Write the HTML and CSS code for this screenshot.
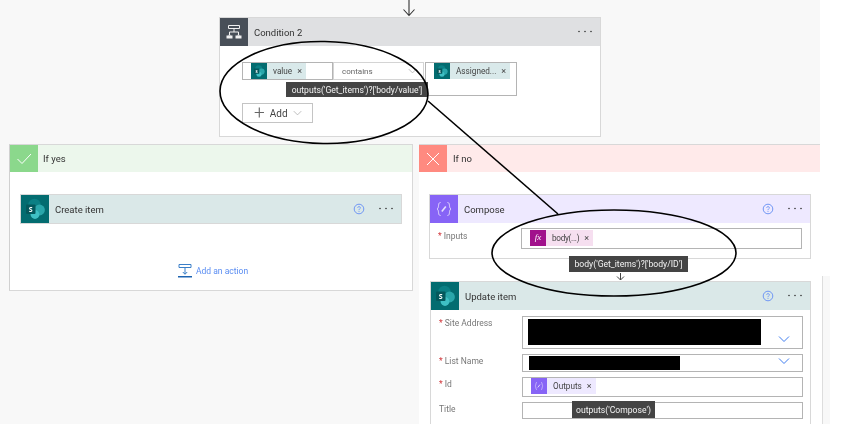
FILE: index.html
```html
<!DOCTYPE html>
<html lang="en">
<head>
<meta charset="utf-8">
<title>Flow designer</title>
<link rel="stylesheet" href="styles.css">
</head>
<body>
<svg width="0" height="0" class="defs">
  <defs>
    <symbol id="sp" viewBox="0 0 28 28">
      <circle cx="13.5" cy="10" r="6.2" fill="#0b7f84"/>
      <circle cx="18.5" cy="15" r="5.4" fill="#2aa6aa"/>
      <circle cx="14" cy="19.5" r="4.4" fill="#3fc0c4"/>
      <rect x="5" y="9.5" width="9.5" height="9.5" rx="1" fill="#04585c"/>
      <text x="9.7" y="17" class="sp-s">S</text>
    </symbol>
    <symbol id="chev" viewBox="0 0 12 8">
      <path d="M1 1.5 6 6.5 11 1.5" fill="none" stroke="currentColor" stroke-width="1"/>
    </symbol>
    <symbol id="help" viewBox="0 0 12 12">
      <circle cx="6" cy="6" r="4.8" fill="none" stroke="#6f96f5" stroke-width="1"/>
      <path d="M4.6 4.8C4.7 3.2 7.4 3.2 7.4 4.8 7.4 5.9 6 5.8 6 7.2M6 8.1V9" fill="none" stroke="#6f96f5" stroke-width=".9"/>
    </symbol>
    <symbol id="dots" viewBox="0 0 16 3">
      <circle cx="2" cy="1.5" r=".8" fill="#333"/>
      <circle cx="8" cy="1.5" r=".8" fill="#333"/>
      <circle cx="14" cy="1.5" r=".8" fill="#333"/>
    </symbol>
    <symbol id="compose" viewBox="0 0 28 28">
      <path d="M10.5 7.5C7.5 7.5 9.5 13 7 14 9.5 15 7.5 20.5 10.5 20.5M17.5 7.5C20.500 7.5 18.500 13 21 14 18.500 15 20.500 20.500 17.500 20.500" fill="none" stroke="#e6defc" stroke-width="1"/>
      <path d="M11.800 16.500 15.800 11.500" stroke="#e6defc" stroke-width="1.600"/>
    </symbol>
  </defs>
</svg>
<div class="page">
  <main class="canvas">
    <svg class="top-arrow" width="14" height="17" viewBox="0 0 14 17"><path d="M7 0V15M1.500 9.500 7 15.500 12.500 9.500" fill="none" stroke="#333" stroke-width="1.100"/></svg>

    <section class="card condition">
      <header class="card-head head-grey">
        <span class="icon icon-grey">
          <svg width="28" height="28" viewBox="0 0 28 28"><path d="M8.500 7.500H19.500V10.500H8.500ZM14 10.500V14M9.500 14H18.500M9.500 14V17M18.500 14V17" fill="none" stroke="#f0f0f0" stroke-width="1"/><path d="M6.500 17.500H12.500V20.500H6.500ZM15.500 17.500H21.500V20.500H15.500Z" fill="#f0f0f0"/><path d="M9.500 16 8 17.500H11ZM18.500 16 17 17.500H20Z" fill="#f0f0f0"/></svg>
        </span>
        <span class="title">Condition 2</span>
        <svg class="more" width="16" height="3"><use href="#dots"/></svg>
      </header>
      <div class="condition-body">
        <div class="cond-row">
          <div class="box cond-box">
            <span class="token token-sp"><svg class="token-icon" viewBox="0 0 28 28"><use href="#sp"/></svg><span class="token-text">value</span><span class="x">×</span></span>
          </div>
          <div class="box cond-box cond-select">
            <span class="select-text">contains</span>
            <svg class="chev chev-grey" width="9" height="6"><use href="#chev"/></svg>
          </div>
          <div class="box cond-box cond-tall">
            <span class="token token-sp"><svg class="token-icon" viewBox="0 0 28 28"><use href="#sp"/></svg><span class="token-text">Assigned...</span><span class="x">×</span></span>
          </div>
        </div>
        <button class="add-btn"><span class="plus">+</span>Add<svg class="chev chev-grey" width="9" height="6"><use href="#chev"/></svg></button>
        <div class="tip tip-cond">outputs('Get_items')?['body/value']</div>
      </div>
    </section>

    <div class="branches">
      <section class="branch branch-yes">
        <header class="branch-head head-yes">
          <span class="branch-icon icon-yes"><svg width="28" height="27" viewBox="0 0 28 27"><path d="M7.500 14 12 18.500 21 9" fill="none" stroke="#fff" stroke-width="1"/></svg></span>
          <span class="title">If yes</span>
        </header>
        <div class="branch-body">
          <article class="card action">
            <header class="card-head head-sp">
              <span class="icon icon-sp"><svg width="28" height="28"><use href="#sp"/></svg></span>
              <span class="title">Create item</span>
              <svg class="help" width="12" height="12"><use href="#help"/></svg>
              <svg class="more" width="16" height="3"><use href="#dots"/></svg>
            </header>
          </article>
          <a class="add-action">
            <svg width="14" height="14" viewBox="0 0 14 14"><path d="M1 .5H13V3.500H1ZM7 3.500V10M4.800 8 7 10.300 9.200 8" fill="none" stroke="#3a7fc8" stroke-width="1"/><path d="M0 12H14V13.500H0Z" fill="#1d63b0"/></svg>
            <span>Add an action</span>
          </a>
        </div>
      </section>

      <section class="branch branch-no">
        <header class="branch-head head-no">
          <span class="branch-icon icon-no"><svg width="28" height="27" viewBox="0 0 28 27"><path d="M8 8 20 20M20 8 8 20" fill="none" stroke="#fff" stroke-width="1"/></svg></span>
          <span class="title">If no</span>
        </header>
        <div class="branch-body branch-body-no">
          <article class="card action">
            <header class="card-head head-compose">
              <span class="icon icon-compose"><svg width="28" height="28"><use href="#compose"/></svg></span>
              <span class="title">Compose</span>
              <svg class="help" width="12" height="12"><use href="#help"/></svg>
              <svg class="more" width="16" height="3"><use href="#dots"/></svg>
            </header>
            <div class="fields">
              <div class="field">
                <label class="label label-first"><i>*</i> Inputs</label>
                <div class="box h-21">
                  <span class="token token-fx"><span class="token-icon fx"><em>fx</em></span><span class="token-text tight">body(...)</span><span class="x">×</span></span>
                </div>
              </div>
            </div>
          </article>
          <div class="connector">
            <svg width="9" height="8" viewBox="0 0 9 8"><path d="M4.500 0V7M1 3.500 4.500 7 8 3.500" fill="none" stroke="#444" stroke-width="1"/></svg>
          </div>
          <article class="card action update">
            <header class="card-head head-sp">
              <span class="icon icon-sp"><svg width="28" height="28"><use href="#sp"/></svg></span>
              <span class="title">Update item</span>
              <svg class="help" width="12" height="12"><use href="#help"/></svg>
              <svg class="more" width="16" height="3"><use href="#dots"/></svg>
            </header>
            <div class="fields fields-update">
              <div class="field">
                <label class="label"><i>*</i> Site Address</label>
                <div class="box h-33 box-dd">
                  <span class="redact redact-site"></span>
                  <svg class="chev chev-blue chev-low" width="12" height="8"><use href="#chev"/></svg>
                </div>
              </div>
              <div class="field">
                <label class="label"><i>*</i> List Name</label>
                <div class="box h-18 box-dd">
                  <span class="redact redact-list"></span>
                  <svg class="chev chev-blue" width="12" height="8"><use href="#chev"/></svg>
                </div>
              </div>
              <div class="field">
                <label class="label"><i>*</i> Id</label>
                <div class="box h-20">
                  <span class="token token-out"><span class="token-icon out"><svg width="16" height="16" viewBox="0 0 28 28"><use href="#compose"/></svg></span><span class="token-text">Outputs</span><span class="x">×</span></span>
                </div>
              </div>
              <div class="field">
                <label class="label">Title</label>
                <div class="box h-17"></div>
              </div>
              <div class="field">
                <span></span>
                <div class="box h-18"></div>
              </div>
              <div class="tip tip-title">outputs('Compose')</div>
            </div>
          </article>
          <div class="tip tip-body">body('Get_items')?['body/ID']</div>
        </div>
      </section>
    </div>

    <svg class="annotations" width="862" height="439" viewBox="0 0 862 439" aria-hidden="true">
      <ellipse cx="324" cy="92.500" rx="104" ry="51" transform="rotate(1 324 92.500)"/>
      <ellipse cx="614" cy="253" rx="122" ry="43"/>
      <path d="M428 101 558 214"/>
    </svg>
  </main>
  <div class="scroll-edge"></div>
</div>
</body>
</html>
```

FILE: styles.css
```css
* { box-sizing: border-box; }
html, body { margin: 0; padding: 0; background: #fff; }
body {
  width: 862px;
  height: 439px;
  overflow: hidden;
  font-family: Roboto, "Open Sans", sans-serif;
  color: #333;
}
.defs { position: absolute; }
.sp-s { font: 700 7px "Open Sans", sans-serif; fill: #fff; text-anchor: middle; }

.page { position: relative; width: 862px; height: 439px; filter: blur(0.35px); }
.canvas {
  position: relative;
  width: 820px;
  height: 424px;
  overflow: hidden;
  background: #f8f8f8;
  display: flex;
  flex-direction: column;
}
.scroll-edge {
  position: absolute;
  left: 822px;
  top: 276px;
  width: 8px;
  height: 148px;
  background: #f8f8f8;
  border-left: 1px solid #ddd;
}
.top-arrow { display: block; margin: 0 0 0 402px; height: 17px; flex: none; }

/* cards */
.card { background: #fff; border: 1px solid #d8d8d8; }
.card-head { display: flex; align-items: center; height: 28px; }
.icon { width: 28px; height: 28px; flex: none; display: block; }
.icon svg { display: block; }
.title { margin-left: 6px; font-size: 9.500px; color: #333; flex: 1; white-space: nowrap; }
.more { display: block; flex: none; margin: -1px 7px 0 0; }
.help { flex: none; margin-right: 13px; display: block; }
.head-grey { background: #dfe0e2; }
.icon-grey { background: #484f58; }
.head-sp { background: #dae8e8; }
.icon-sp { background: #036c70; }
.head-compose { background: #eee9ff; }
.icon-compose { background: #8764f6; }

/* condition */
.condition { width: 382px; height: 120px; margin-left: 219px; flex: none; }
.condition-body { position: relative; padding: 16px 0 0 22px; }
.cond-row { display: flex; align-items: flex-start; }
.box {
  border: 1px solid #b4b4b4;
  background: #fff;
  position: relative;
  display: flex;
  align-items: flex-start;
}
.cond-box { width: 91px; height: 18px; padding-left: 8px; }
.cond-select { border-color: #d4d4d4; justify-content: space-between; align-items: center; }
.select-text { font-size: 8px; color: #666; margin-top: 1px; }
.cond-select .chev { margin-right: 6px; }
.cond-tall { height: 34px; width: 92px; margin-left: 1px; }
.chev { display: block; flex: none; }
.chev-grey { color: #aaa; }
.chev-blue { color: #3f7df0; }
.box-dd { justify-content: space-between; }
.box-dd .chev { margin: 2px 12px 0 0; }
.box-dd .chev-low { margin-top: 18px; }
.add-btn {
  display: flex;
  align-items: center;
  width: 71px;
  height: 20px;
  margin-top: 7px;
  padding: 0 0 0 11px;
  background: #fff;
  border: 1px solid #c4c4c4;
  font: 10px Roboto, sans-serif;
  color: #444;
}
.plus { font-size: 19px; font-weight: 300; color: #666; margin-right: 5px; line-height: 14px; }
.add-btn .chev { margin-left: 5px; }

/* tokens */
.token { display: inline-flex; align-items: center; height: 16px; font-size: 8.200px; flex: none; }
.token-icon { width: 16px; height: 16px; display: block; flex: none; }
.token-text { margin: 0 5px 0 6px; color: #444; white-space: nowrap; }
.tight { letter-spacing: -0.3px; }
.x { font-size: 9px; color: #444; margin-right: 4px; line-height: 1; }
.token-sp { background: #d9e9ea; }
svg.token-icon { background: #036c70; }
.token-fx { background: #f6dff0; margin-left: 8px; margin-top: 1px; }
.fx { background: #a1118c; color: #fff; text-align: center; }
.fx em { font: italic 9px/15px "Liberation Serif", serif; }
.token-out { background: #eee9ff; margin-left: 8px; }
.out { background: #8764f6; }
.out svg { display: block; }

/* branches */
.branches { display: flex; margin: 7px 0 0 9px; align-items: flex-start; gap: 6px; flex: none; }
.branch { background: #fff; border-top: 1px solid #d8d8d8; }
.branch-yes { width: 404px; height: 147px; border-left: 1px solid #d0d0d0; border-right: 1px solid #d8d8d8; border-bottom: 1px solid #d8d8d8; }
.branch-no { width: 401px; height: 280px; }
.branch-head { display: flex; align-items: center; height: 27px; }
.branch-icon { width: 28px; height: 27px; flex: none; display: block; }
.branch-icon svg { display: block; }
.head-yes { background: #ecf7ec; }
.head-yes .title { margin-left: 5px; }
.icon-yes { background: #8bd88c; }
.head-no { background: #ffeaea; }
.icon-no { background: #ff8a80; }
.branch-body { padding: 22px 10px 0; position: relative; }
.branch-body-no { padding-right: 9px; }
.action { width: 382px; }
.add-action {
  display: flex;
  align-items: center;
  gap: 4px;
  margin: 40px 0 0 158px;
  color: #5a8df2;
  font-size: 8.500px;
  line-height: 14px;
}
.add-action svg { display: block; }

/* form fields */
.fields { padding: 5px 8px 9px; display: flex; flex-direction: column; gap: 5px; position: relative; }
.fields-update { padding-top: 6px; }
.field { display: grid; grid-template-columns: 83px 281px; align-items: start; }
.label { font-size: 8.500px; color: #777; padding-top: 2px; white-space: nowrap; }
.label-first { padding-top: 3px; }
.label i { color: #d13438; font-style: normal; }
.h-33 { height: 33px; }
.h-21 { height: 21px; }
.h-20 { height: 20px; }
.h-18 { height: 18px; }
.h-17 { height: 17px; }
.redact { display: block; background: #000; flex: none; }
.redact-site { width: 233px; height: 26px; margin: 2px 0 0 5px; }
.redact-list { width: 151px; height: 14px; margin: 1px 0 0 6px; }
.connector { height: 22px; width: 382px; display: flex; justify-content: center; align-items: flex-end; }
.connector svg { display: block; }
.update { width: 381px; margin-left: 1px; height: 170px; }

/* tooltips over the fields */
.tip {
  position: absolute;
  background: #444;
  color: #f4f4f4;
  font-size: 8.600px;
  white-space: nowrap;
  display: flex;
  align-items: center;
  justify-content: center;
}
.tip-cond { left: 66px; top: 36px; width: 142px; height: 15px; }
.tip-body { left: 150px; top: 84px; width: 119px; height: 16px; }
.tip-title { left: 141px; top: 91px; width: 83px; height: 17px; }

/* annotation overlay */
.annotations { position: absolute; left: 0; top: 0; pointer-events: none; }
.annotations ellipse, .annotations path { fill: none; stroke: #000; stroke-width: 1.600; }
```
